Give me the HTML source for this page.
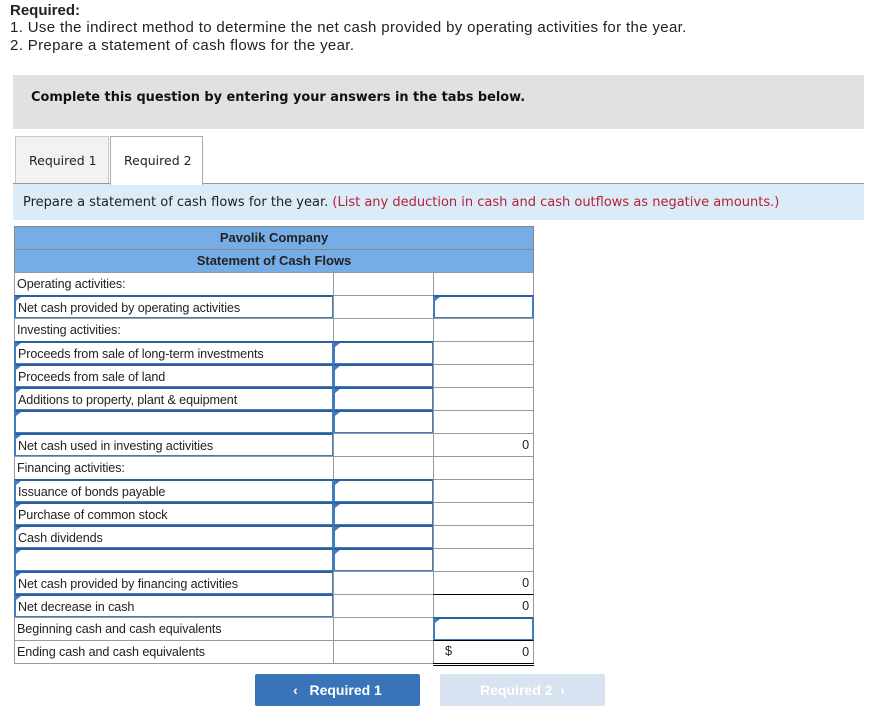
<!DOCTYPE html>
<html><head><meta charset="utf-8"><style>
*{margin:0;padding:0;box-sizing:border-box}
body{width:872px;height:719px;background:#fff;position:relative;font-family:"Liberation Sans",Arial,sans-serif;color:#222;overflow:hidden}
.a{position:absolute}
.top{left:10px;font-size:15px;line-height:18px;color:#222;letter-spacing:.35px;white-space:nowrap}
.v{font-family:"DejaVu Sans",Verdana,sans-serif}
.c{position:absolute;border:1px solid #999;height:24px;font-size:12.6px;line-height:22px;padding-left:2px;color:#222;white-space:nowrap;letter-spacing:-.1px}
.in{position:absolute;border:2px solid #3f7cc0;border-top-color:#2f5f9a}
.in:before{content:"";position:absolute;left:0;top:0;border-left:5px solid #3f7cc0;border-bottom:4px solid transparent}
.num{text-align:right;padding-right:4px}
</style></head><body>
<div class="a top" style="top:2px;font-weight:bold;letter-spacing:0">Required:</div>
<div class="a top" style="top:19px">1. Use the indirect method to determine the net cash provided by operating activities for the year.</div>
<div class="a top" style="top:37px">2. Prepare a statement of cash flows for the year.</div>
<div class="a" style="left:13px;top:75px;width:851px;height:54px;background:#e1e1e1"></div>
<div class="a v" style="left:31px;top:90px;font-size:12.9px;font-weight:bold;color:#111">Complete this question by entering your answers in the tabs below.</div>
<div class="a" style="left:15px;top:136px;width:94px;height:48px;background:#f2f2f2;border:1px solid #c8c8c8"></div>
<div class="a v" style="left:29px;top:153px;font-size:12.5px">Required 1</div>
<div class="a" style="left:110px;top:136px;width:93px;height:49px;background:#fff;border:1px solid #aaa;border-bottom:none;z-index:2"></div>
<div class="a v" style="left:124px;top:153px;font-size:12.5px;z-index:3">Required 2</div>
<div class="a" style="left:13px;top:183px;width:851px;height:1px;background:#999"></div>
<div class="a" style="left:13px;top:184px;width:851px;height:36px;background:#dcebf8"></div>
<div class="a v" style="left:23px;top:195px;font-size:13px;color:#222;white-space:nowrap">Prepare a statement of cash flows for the year. <span style="color:#b3223a">(List any deduction in cash and cash outflows as negative amounts.)</span></div>

<div class="a" style="left:14px;top:226px;width:520px;height:47px;background:#77ade6;border:1px solid #888"></div>
<div class="a" style="left:14px;top:249px;width:520px;height:1px;background:#888"></div>
<div class="a" style="left:14px;top:230px;width:520px;text-align:center;font-size:13px;font-weight:bold;color:#222">Pavolik Company</div>
<div class="a" style="left:14px;top:253px;width:520px;text-align:center;font-size:13px;font-weight:bold;color:#222">Statement of Cash Flows</div>

<div class="c" style="left:14px;top:272px;width:320px">Operating activities:</div><div class="c" style="left:333px;top:272px;width:101px"></div><div class="c" style="left:433px;top:272px;width:101px"></div>
<div class="c" style="left:14px;top:295px;width:320px"></div><div class="in c" style="left:14px;top:295px;width:320px;height:24px">Net cash provided by operating activities</div><div class="c" style="left:333px;top:295px;width:101px"></div><div class="c" style="left:433px;top:295px;width:101px"></div><div class="in" style="left:433px;top:295px;width:101px;height:24px"></div>
<div class="c" style="left:14px;top:318px;width:320px">Investing activities:</div><div class="c" style="left:333px;top:318px;width:101px"></div><div class="c" style="left:433px;top:318px;width:101px"></div>

<div class="c" style="left:14px;top:341px;width:320px"></div><div class="in c" style="left:14px;top:341px;width:320px">Proceeds from sale of long-term investments</div><div class="c" style="left:333px;top:341px;width:101px"></div><div class="in" style="left:333px;top:341px;width:101px;height:24px"></div><div class="c" style="left:433px;top:341px;width:101px"></div>
<div class="c" style="left:14px;top:364px;width:320px"></div><div class="in c" style="left:14px;top:364px;width:320px">Proceeds from sale of land</div><div class="c" style="left:333px;top:364px;width:101px"></div><div class="in" style="left:333px;top:364px;width:101px;height:24px"></div><div class="c" style="left:433px;top:364px;width:101px"></div>
<div class="c" style="left:14px;top:387px;width:320px"></div><div class="in c" style="left:14px;top:387px;width:320px">Additions to property, plant &amp; equipment</div><div class="c" style="left:333px;top:387px;width:101px"></div><div class="in" style="left:333px;top:387px;width:101px;height:24px"></div><div class="c" style="left:433px;top:387px;width:101px"></div>
<div class="c" style="left:14px;top:410px;width:320px"></div><div class="in c" style="left:14px;top:410px;width:320px"></div><div class="c" style="left:333px;top:410px;width:101px"></div><div class="in" style="left:333px;top:410px;width:101px;height:24px"></div><div class="c" style="left:433px;top:410px;width:101px"></div>
<div class="c" style="left:14px;top:433px;width:320px"></div><div class="in c" style="left:14px;top:433px;width:320px">Net cash used in investing activities</div><div class="c" style="left:333px;top:433px;width:101px"></div><div class="c num" style="left:433px;top:433px;width:101px">0</div>
<div class="c" style="left:14px;top:456px;width:320px">Financing activities:</div><div class="c" style="left:333px;top:456px;width:101px"></div><div class="c" style="left:433px;top:456px;width:101px"></div>

<div class="c" style="left:14px;top:479px;width:320px"></div><div class="in c" style="left:14px;top:479px;width:320px">Issuance of bonds payable</div><div class="c" style="left:333px;top:479px;width:101px"></div><div class="in" style="left:333px;top:479px;width:101px;height:24px"></div><div class="c" style="left:433px;top:479px;width:101px"></div>
<div class="c" style="left:14px;top:502px;width:320px"></div><div class="in c" style="left:14px;top:502px;width:320px">Purchase of common stock</div><div class="c" style="left:333px;top:502px;width:101px"></div><div class="in" style="left:333px;top:502px;width:101px;height:24px"></div><div class="c" style="left:433px;top:502px;width:101px"></div>
<div class="c" style="left:14px;top:525px;width:320px"></div><div class="in c" style="left:14px;top:525px;width:320px">Cash dividends</div><div class="c" style="left:333px;top:525px;width:101px"></div><div class="in" style="left:333px;top:525px;width:101px;height:24px"></div><div class="c" style="left:433px;top:525px;width:101px"></div>
<div class="c" style="left:14px;top:548px;width:320px"></div><div class="in c" style="left:14px;top:548px;width:320px"></div><div class="c" style="left:333px;top:548px;width:101px"></div><div class="in" style="left:333px;top:548px;width:101px;height:24px"></div><div class="c" style="left:433px;top:548px;width:101px"></div>

<div class="c" style="left:14px;top:571px;width:320px"></div><div class="in c" style="left:14px;top:571px;width:320px">Net cash provided by financing activities</div><div class="c" style="left:333px;top:571px;width:101px"></div><div class="c num" style="left:433px;top:571px;width:101px">0</div>
<div class="c" style="left:14px;top:594px;width:320px"></div><div class="in c" style="left:14px;top:594px;width:320px">Net decrease in cash</div><div class="c" style="left:333px;top:594px;width:101px"></div><div class="c num" style="left:433px;top:594px;width:101px;border-top:1px solid #000">0</div>
<div class="c" style="left:14px;top:617px;width:320px">Beginning cash and cash equivalents</div><div class="c" style="left:333px;top:617px;width:101px"></div><div class="c" style="left:433px;top:617px;width:101px"></div><div class="in" style="left:433px;top:617px;width:101px;height:24px"></div>
<div class="c" style="left:14px;top:640px;width:320px">Ending cash and cash equivalents</div><div class="c" style="left:333px;top:640px;width:101px"></div><div class="c num" style="left:433px;top:640px;width:101px;border-top:1px solid #000">0</div>
<div class="a" style="left:445px;top:644px;font-size:12.6px">$</div>
<div class="a" style="left:433px;top:663px;width:101px;height:3px;border-top:1px solid #000;border-bottom:1px solid #000"></div>

<div class="a" style="left:255px;top:674px;width:165px;height:32px;background:#3a74b8;border-radius:2px;color:#fff;font-weight:bold;font-size:14px;line-height:32px;text-align:center">&#x2039;&nbsp;&nbsp; Required 1</div>
<div class="a" style="left:440px;top:674px;width:165px;height:32px;background:#d7e3f0;border-radius:2px;color:#fff;font-weight:bold;font-size:14px;line-height:32px;text-align:center">Required 2 &nbsp;&#x203A;</div>
</body></html>
